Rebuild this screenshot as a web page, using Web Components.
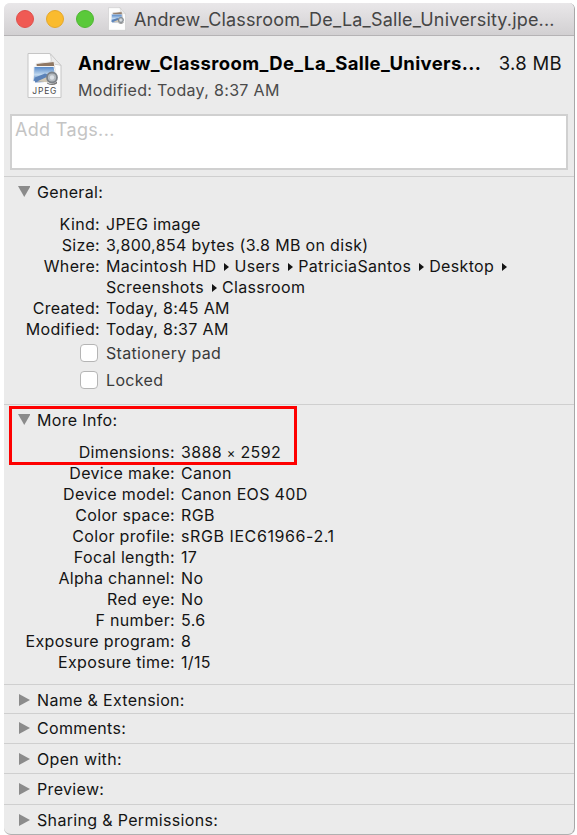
<!DOCTYPE html>
<html lang="en">
<head>
<meta charset="utf-8">
<title>File Info</title>
<style>
  body {
    margin: 0;
    background: #fff;
    font-family: Inter, "Liberation Sans", sans-serif;
    font-size: 16px;
    letter-spacing: 0.33px;
    color: #141414;
  }
  small { font-size: 13px; line-height: 0; }
</style>
</head>
<body>
<info-window>
  <title-bar slot="title">Andrew_Classroom_De_La_Salle_University.jpe...</title-bar>
  <file-header name="Andrew_Classroom_De_La_Salle_Univers..." size="3.8 MB">Modified: Today, 8:37 AM</file-header>
  <tag-field>Add Tags...</tag-field>

  <info-section label="General:" open style="height: 228px; --label-width: 96px">
    <info-row label="Kind:">JPEG image</info-row>
    <info-row label="Size:">3,800,854 bytes (3.8 MB on disk)</info-row>
    <info-row label="Where:">Macintosh HD<path-arrow></path-arrow>Users<path-arrow></path-arrow>PatriciaSantos<path-arrow></path-arrow>Desktop<path-arrow></path-arrow><br>Screenshots<path-arrow></path-arrow>Classroom</info-row>
    <info-row label="Created:">Today, 8:45 AM</info-row>
    <info-row label="Modified:">Today, 8:37 AM</info-row>
    <check-row>Stationery pad</check-row>
    <check-row>Locked</check-row>
  </info-section>

  <info-section label="More Info:" open marked style="height: 280px; --label-width: 171px">
    <info-row label="Dimensions:">3888 <small>×</small> 2592</info-row>
    <info-row label="Device make:">Canon</info-row>
    <info-row label="Device model:">Canon EOS 40D</info-row>
    <info-row label="Color space:">RGB</info-row>
    <info-row label="Color profile:" style="--value-spacing: 0.58px">sRGB IEC61966-2.1</info-row>
    <info-row label="Focal length:">17</info-row>
    <info-row label="Alpha channel:">No</info-row>
    <info-row label="Red eye:">No</info-row>
    <info-row label="F number:">5.6</info-row>
    <info-row label="Exposure program:">8</info-row>
    <info-row label="Exposure time:">1/15</info-row>
  </info-section>

  <info-section label="Name &amp; Extension:" style="height: 29px"></info-section>
  <info-section label="Comments:" style="--head-height: 28px"></info-section>
  <info-section label="Open with:"></info-section>
  <info-section label="Preview:" style="height: 31px"></info-section>
  <info-section label="Sharing &amp; Permissions:" style="--head-height: 29px"></info-section>
</info-window>

<script>
class InfoWindow extends HTMLElement {
  connectedCallback() {
    this.attachShadow({ mode: 'open' }).innerHTML = `
      <style>
        :host {
          display: block;
          box-sizing: border-box;
          width: 571px;
          height: 832px;
          margin: 3px 0 0 4px;
          overflow: hidden;
          background: #ebebeb;
          border-right: 1px solid #a8a8a8;
          border-bottom: 1px solid #b0b0b0;
          border-radius: 6px 6px 7px 7px;
        }
      </style>
      <slot name="title"></slot>
      <slot></slot>
    `;
  }
}

class TitleBar extends HTMLElement {
  connectedCallback() {
    this.attachShadow({ mode: 'open' }).innerHTML = `
      <style>
        :host {
          display: flex;
          align-items: center;
          box-sizing: border-box;
          height: 33px;
          padding-left: 12px;
          background: linear-gradient(#e9e7e9, #d2d0d2);
          border-bottom: 1px solid #b5b3b5;
          color: #454545;
          font-size: 18px;
          letter-spacing: 0.17px;
          white-space: nowrap;
        }
        i {
          box-sizing: border-box;
          width: 18px;
          height: 18px;
          margin-right: 12px;
          border-radius: 50%;
          background: #f05a54;
          border: 1px solid #e04f4b;
        }
        .min { background: #fabb2e; border-color: #e5a72a; }
        .max { background: #5ac93a; border-color: #4eb732; }
        doc-icon { width: 18px; height: 24px; margin: 0 8px 0 2px; }
      </style>
      <i></i><i class="min"></i><i class="max"></i>
      <doc-icon plain></doc-icon>
      <span><slot></slot></span>
    `;
  }
}

class DocIcon extends HTMLElement {
  connectedCallback() {
    const caption = this.hasAttribute('plain') ? '' :
      '<text x="17.8" y="41" text-anchor="middle" font-size="8.5" letter-spacing="0.8" fill="#4a4a4a">JPEG</text>';
    this.attachShadow({ mode: 'open' }).innerHTML = `
      <style>
        :host { display: block; flex: none; }
        svg { display: block; width: 100%; height: 100%; overflow: visible; }
      </style>
      <svg viewBox="0 0 35 46">
        <defs>
          <linearGradient id="sky" x2="0" y2="1">
            <stop offset="0" stop-color="#4f83c6"/>
            <stop offset=".55" stop-color="#c3daf0"/>
            <stop offset="1" stop-color="#2f65ad"/>
          </linearGradient>
        </defs>
        <path d="M1 1H23L34 13V45H1Z" fill="#fdfdfd" stroke="#c5c5c5"/>
        <path d="M23 1C24.500 5 24.500 9 23.500 12C27 11.500 31 12 34 13Z" fill="#ececec" stroke="#c9c9c9" stroke-width=".8"/>
        <path d="M9 11L27 9L29 22L10 23Z" fill="#8f7763" stroke="#eee"/>
        <path d="M7 14L27 14L29 26L6 29Z" fill="url(#sky)" stroke="#f5f5f5"/>
        <path d="M8 25L18 21L27 24L28 29L8 30Z" fill="#5b82b8"/>
        <path d="M10 29L23 23L25 30Z" fill="#d1c7b4"/>
        <circle cx="25" cy="25" r="5" fill="#b4babf" stroke="#7c8288" stroke-width="1.800"/>
        <circle cx="25" cy="25" r="2.200" fill="#dbe0e5"/>
        <path d="M20 30Q25 33 30 29L30 31Q25 34 20 31Z" fill="#777"/>
        ${caption}
      </svg>
    `;
  }
}

class FileHeader extends HTMLElement {
  connectedCallback() {
    this.attachShadow({ mode: 'open' }).innerHTML = `
      <style>
        :host {
          display: flex;
          box-sizing: border-box;
          height: 78px;
          padding: 16px 12px 0 23px;
          white-space: nowrap;
        }
        doc-icon { width: 35px; height: 47px; margin-right: 16px; }
        .text { flex: 1; }
        .top {
          display: flex;
          justify-content: space-between;
          height: 23px;
          line-height: 22px;
          font-size: 18.5px;
        }
        b { color: #000; letter-spacing: 0.37px; }
        .size { letter-spacing: 0.3px; }
        .sub { padding-top: 3px; line-height: 24px; color: #4a4a4a; }
      </style>
      <doc-icon></doc-icon>
      <div class="text">
        <div class="top"><b>${this.getAttribute('name')}</b><span class="size">${this.getAttribute('size')}</span></div>
        <div class="sub"><slot></slot></div>
      </div>
    `;
  }
}

class TagField extends HTMLElement {
  connectedCallback() {
    this.attachShadow({ mode: 'open' }).innerHTML = `
      <style>
        :host {
          display: block;
          box-sizing: border-box;
          width: 558px;
          height: 56px;
          margin: 0 0 6px 6px;
          padding: 2px 3px;
          border: 2px solid #d0d0d0;
          background: #fff;
          color: #c4c4c4;
          font-size: 18px;
          line-height: 24px;
        }
      </style>
      <slot></slot>
    `;
  }
}

class InfoSection extends HTMLElement {
  connectedCallback() {
    const open = this.hasAttribute('open');
    this.attachShadow({ mode: 'open' }).innerHTML = `
      <style>
        :host {
          display: block;
          position: relative;
          box-sizing: border-box;
          height: 30px;
          border-top: 1px solid #cfcfcf;
        }
        .head {
          display: flex;
          align-items: center;
          height: var(--head-height, 30px);
          padding-left: 14px;
          white-space: nowrap;
        }
        svg { width: 12px; height: 12px; margin-right: 7px; fill: #8b8b8b; }
        .body { padding-top: 7px; }
        .mark {
          position: absolute;
          left: 5px;
          top: 1px;
          width: 282px;
          height: 53px;
          border: 3px solid #fe0000;
        }
      </style>
      <div class="head">
        <svg viewBox="0 0 12 12"><path d="${open ? 'M0 0H12.500L6.250 11Z' : 'M1 0L12 6L1 12Z'}"/></svg>
        <span>${this.getAttribute('label').replace('&', '&amp;')}</span>
      </div>
      ${open ? '<div class="body"><slot></slot></div>' : ''}
      ${this.hasAttribute('marked') ? '<div class="mark"></div>' : ''}
    `;
  }
}

class InfoRow extends HTMLElement {
  connectedCallback() {
    this.attachShadow({ mode: 'open' }).innerHTML = `
      <style>
        :host {
          display: grid;
          grid-template-columns: var(--label-width) 1fr;
          column-gap: 6px;
          line-height: 21px;
          white-space: nowrap;
        }
        .label { text-align: right; }
        .value { letter-spacing: var(--value-spacing, inherit); }
      </style>
      <div class="label">${this.getAttribute('label')}</div>
      <div class="value"><slot></slot></div>
    `;
  }
}

class PathArrow extends HTMLElement {
  connectedCallback() {
    this.attachShadow({ mode: 'open' }).innerHTML = `
      <style>
        :host { display: inline-block; width: 5px; margin: 0 5px 0 8px; }
        svg { display: block; width: 5px; height: 8px; margin-bottom: 1px; }
      </style>
      <svg viewBox="0 0 5 8"><path d="M0 0L5 4L0 8Z" fill="#141414"/></svg>
    `;
  }
}

class CheckRow extends HTMLElement {
  connectedCallback() {
    this.attachShadow({ mode: 'open' }).innerHTML = `
      <style>
        :host {
          display: flex;
          align-items: center;
          height: 27px;
          margin-top: -1px;
          margin-bottom: 1px;
          padding-left: 76px;
          color: #3a3a3a;
        }
        i {
          box-sizing: border-box;
          width: 18px;
          height: 18px;
          margin-right: 8px;
          border: 1px solid #b5b5b5;
          border-radius: 4px;
          background: #fff;
        }
      </style>
      <i></i><span><slot></slot></span>
    `;
  }
}

customElements.define('info-window', InfoWindow);
customElements.define('title-bar', TitleBar);
customElements.define('doc-icon', DocIcon);
customElements.define('file-header', FileHeader);
customElements.define('tag-field', TagField);
customElements.define('info-section', InfoSection);
customElements.define('info-row', InfoRow);
customElements.define('path-arrow', PathArrow);
customElements.define('check-row', CheckRow);
</script>
</body>
</html>
